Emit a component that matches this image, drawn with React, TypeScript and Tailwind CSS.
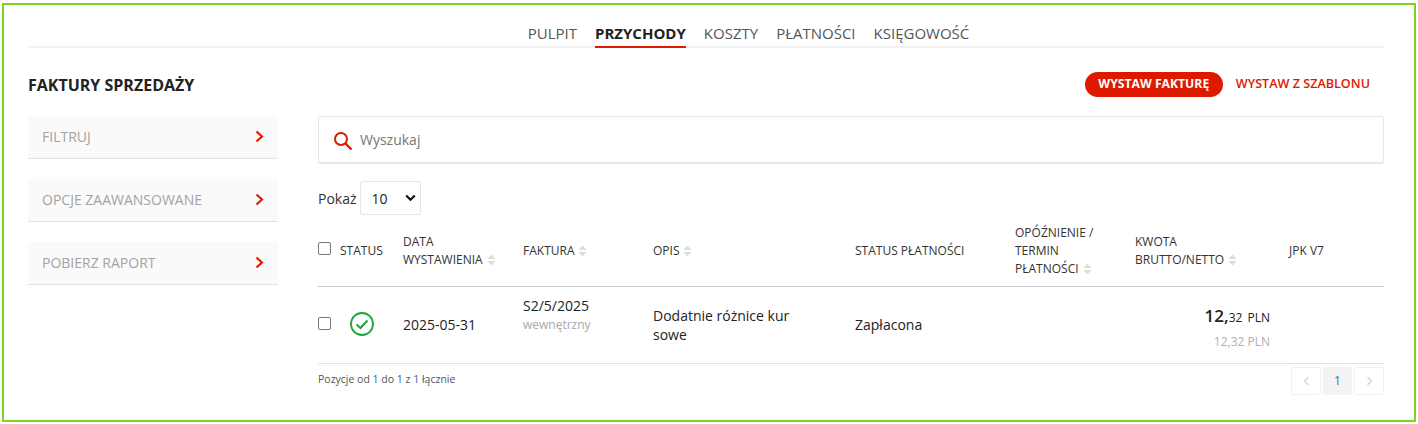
import React from "react";

const Sort = () => (
  <svg width="9" height="12" viewBox="0 0 9 12" className="inline-block ml-[4px] align-[-2px]" fill="#dcdcdc">
    <path d="M4.5 0.5 L8.5 5 L0.5 5 Z" />
    <path d="M4.5 11.5 L8.5 7 L0.5 7 Z" />
  </svg>
);

const Chevron = () => (
  <svg width="9" height="13" viewBox="0 0 9 13" fill="none" stroke="#dd1a00" strokeWidth="2.2">
    <path d="M1.5 1.5 L7 6.5 L1.5 11.5" />
  </svg>
);

const SideItem = ({ label }: { label: string }) => (
  <div className="h-[43px] bg-[#fafafa] border-b border-[#e2e2e2] flex items-center justify-between pl-[14px] pr-[14px] pb-[2px] text-[14px] text-[#a3a3a3]">
    <span>{label}</span>
    <Chevron />
  </div>
);

export default function App() {
  return (
    <div className="w-[1418px] h-[424px] bg-white pt-[3px] pl-[2px] overflow-hidden" style={{ fontFamily: '"Open Sans", sans-serif' }}>
      <div className="w-[1414px] h-[419px] border-2 border-[#7ed321] pl-[24px] pr-[30px] flex flex-col text-[#222]">
        <nav className="h-[40px] mt-[3px] border-b-2 border-[#f3f3f3] flex justify-center gap-[18px] pl-[85px] text-[15px] text-[#555] uppercase">
          <a className="pt-[15px] h-[40px] leading-[20px]">Pulpit</a>
          <a className="pt-[15px] h-[40px] leading-[20px] font-bold text-[#222] border-b-2 border-[#dd1a00]">Przychody</a>
          <a className="pt-[15px] h-[40px] leading-[20px]">Koszty</a>
          <a className="pt-[15px] h-[40px] leading-[20px]">Płatności</a>
          <a className="pt-[15px] h-[40px] leading-[20px]">Księgowość</a>
        </nav>

        <div className="flex items-center justify-between h-[25px] mt-[24px]">
          <h1 className="text-[16px] font-bold text-[#222]">FAKTURY SPRZEDAŻY</h1>
          <div className="flex items-center font-semibold pr-[14px]">
            <button className="h-[25px] w-[138px] rounded-full bg-[#dd1a00] text-white font-bold text-[12.2px]">WYSTAW FAKTURĘ</button>
            <a className="ml-[13px] text-[#dd1a00] text-[12.6px]">WYSTAW Z SZABLONU</a>
          </div>
        </div>

        <div className="flex mt-[19px] gap-[40px]">
          <aside className="w-[250px] shrink-0 flex flex-col gap-[20px]">
            <SideItem label="FILTRUJ" />
            <SideItem label="OPCJE ZAAWANSOWANE" />
            <SideItem label="POBIERZ RAPORT" />
          </aside>

          <main className="flex-1 min-w-0">
            <div className="h-[48px] rounded-[2px] border border-[#e6e6e6] border-b-2 flex items-center pl-[14px] gap-[7px] text-[14px] text-[#777]">
              <svg width="20" height="20" viewBox="0 0 20 20" fill="none" stroke="#dd1a00" strokeWidth="2" className="mt-[2px]">
                <circle cx="8" cy="8" r="6" />
                <path d="M12.5 12.5 L18.5 18.5" strokeWidth="2.4" />
              </svg>
              <span>Wyszukaj</span>
            </div>

            <div className="flex items-center mt-[17px] h-[34px] text-[14px] text-[#333]">
              <span className="mr-[3px]">Pokaż</span>
              <div className="w-[61px] h-[34px] rounded-[2px] border border-[#e6e6e6] flex items-center justify-between pl-[11px] pr-[3px] text-[#222]">
                <span>10</span>
                <svg width="11" height="8" viewBox="0 0 11 8" fill="none" stroke="#111" strokeWidth="2.2" className="mr-[1px]"><path d="M1.2 1.5 L5.5 5.8 L9.8 1.5" /></svg>
              </div>
            </div>

            <table className="w-[1066px] mt-[5px] table-fixed border-collapse text-left">
              <colgroup>
                <col className="w-[22px]" />
                <col className="w-[63px]" />
                <col className="w-[120px]" />
                <col className="w-[130px]" />
                <col className="w-[202px]" />
                <col className="w-[160px]" />
                <col className="w-[120px]" />
                <col className="w-[154px]" />
                <col className="w-[95px]" />
              </colgroup>
              <thead>
                <tr className="h-[66px] border-b border-[#c8c8c8] text-[12px] leading-[18px] text-[#333] uppercase">
                  <th className="font-normal p-0 pb-[4px] align-middle"><span className="block w-[13px] h-[13px] rounded-[2px] border border-[#767676] bg-white -mt-[4px]" /></th>
                  <th className="font-normal p-0 pb-[4px]">Status</th>
                  <th className="font-normal p-0 pb-[4px]">Data<br />wystawienia<Sort /></th>
                  <th className="font-normal p-0 pb-[4px]">Faktura<Sort /></th>
                  <th className="font-normal p-0 pb-[4px]">Opis<Sort /></th>
                  <th className="font-normal p-0 pb-[4px]">Status płatności</th>
                  <th className="font-normal p-0 pb-[4px]">Opóźnienie /<br />termin<br />płatności<Sort /></th>
                  <th className="font-normal p-0 pb-[4px]">Kwota<br />brutto/netto<Sort /></th>
                  <th className="font-normal p-0 pb-[4px]">JPK V7</th>
                </tr>
              </thead>
              <tbody>
                <tr className="h-[77px] border-b border-[#e4e4e4] text-[14px] text-[#222]">
                  <td className="p-0"><span className="block w-[13px] h-[13px] rounded-[2px] border border-[#767676] bg-white -mt-[2px]" /></td>
                  <td className="p-0">
                    <svg width="26" height="26" viewBox="0 0 26 26" fill="none" stroke="#1fa23a" strokeWidth="1.8" className="ml-[9px] mt-[-1px]">
                      <circle cx="13" cy="13" r="11" />
                      <path d="M7.5 13.5 L11.5 17 L18.5 9.5" strokeWidth="2" />
                    </svg>
                  </td>
                  <td className="p-0">2025-05-31</td>
                  <td className="p-0 pb-[20px] align-middle">
                    <div className="text-[14px] leading-[20px]">S2/5/2025</div>
                    <div className="text-[12px] leading-[18px] text-[#a8a8a8]">wewnętrzny</div>
                  </td>
                  <td className="p-0 pt-[1px] leading-[19px]">Dodatnie różnice kur<br />sowe</td>
                  <td className="p-0">Zapłacona</td>
                  <td className="p-0" />
                  <td className="p-0 pt-[6px] text-right pr-[19px] align-middle">
                    <div className="text-[12px] leading-[22px] text-[#222]"><span className="font-semibold text-[17px]">12,</span>32 <span className="ml-[2px]">PLN</span></div>
                    <div className="text-[12px] leading-[18px] text-[#b0b0b0] mt-[4px]">12,32 PLN</div>
                  </td>
                  <td className="p-0" />
                </tr>
              </tbody>
            </table>

            <div className="flex justify-between mt-[3px]">
              <div className="text-[10.5px] text-[#555] mt-[5px] leading-[14px]">Pozycje od <span className="text-[#35618f]">1</span> do <span className="text-[#35618f]">1</span> z <span className="text-[#35618f]">1</span> łącznie</div>
              <div className="flex gap-[2px] text-[12px]">
                <div className="w-[30px] h-[28px] rounded-[2px] border border-[#f1f1f1] flex items-center justify-center">
                  <svg width="7" height="10" viewBox="0 0 7 10" fill="none" stroke="#d4d4d4" strokeWidth="1.4"><path d="M5.5 1 L1.5 5 L5.5 9" /></svg>
                </div>
                <div className="w-[29px] h-[28px] rounded-[2px] bg-[#f3f3f3] flex items-center justify-center text-[#3f6f96]">1</div>
                <div className="w-[30px] h-[28px] rounded-[2px] border border-[#f1f1f1] flex items-center justify-center">
                  <svg width="7" height="10" viewBox="0 0 7 10" fill="none" stroke="#d4d4d4" strokeWidth="1.4"><path d="M1.5 1 L5.5 5 L1.5 9" /></svg>
                </div>
              </div>
            </div>
          </main>
        </div>
      </div>
    </div>
  );
}
